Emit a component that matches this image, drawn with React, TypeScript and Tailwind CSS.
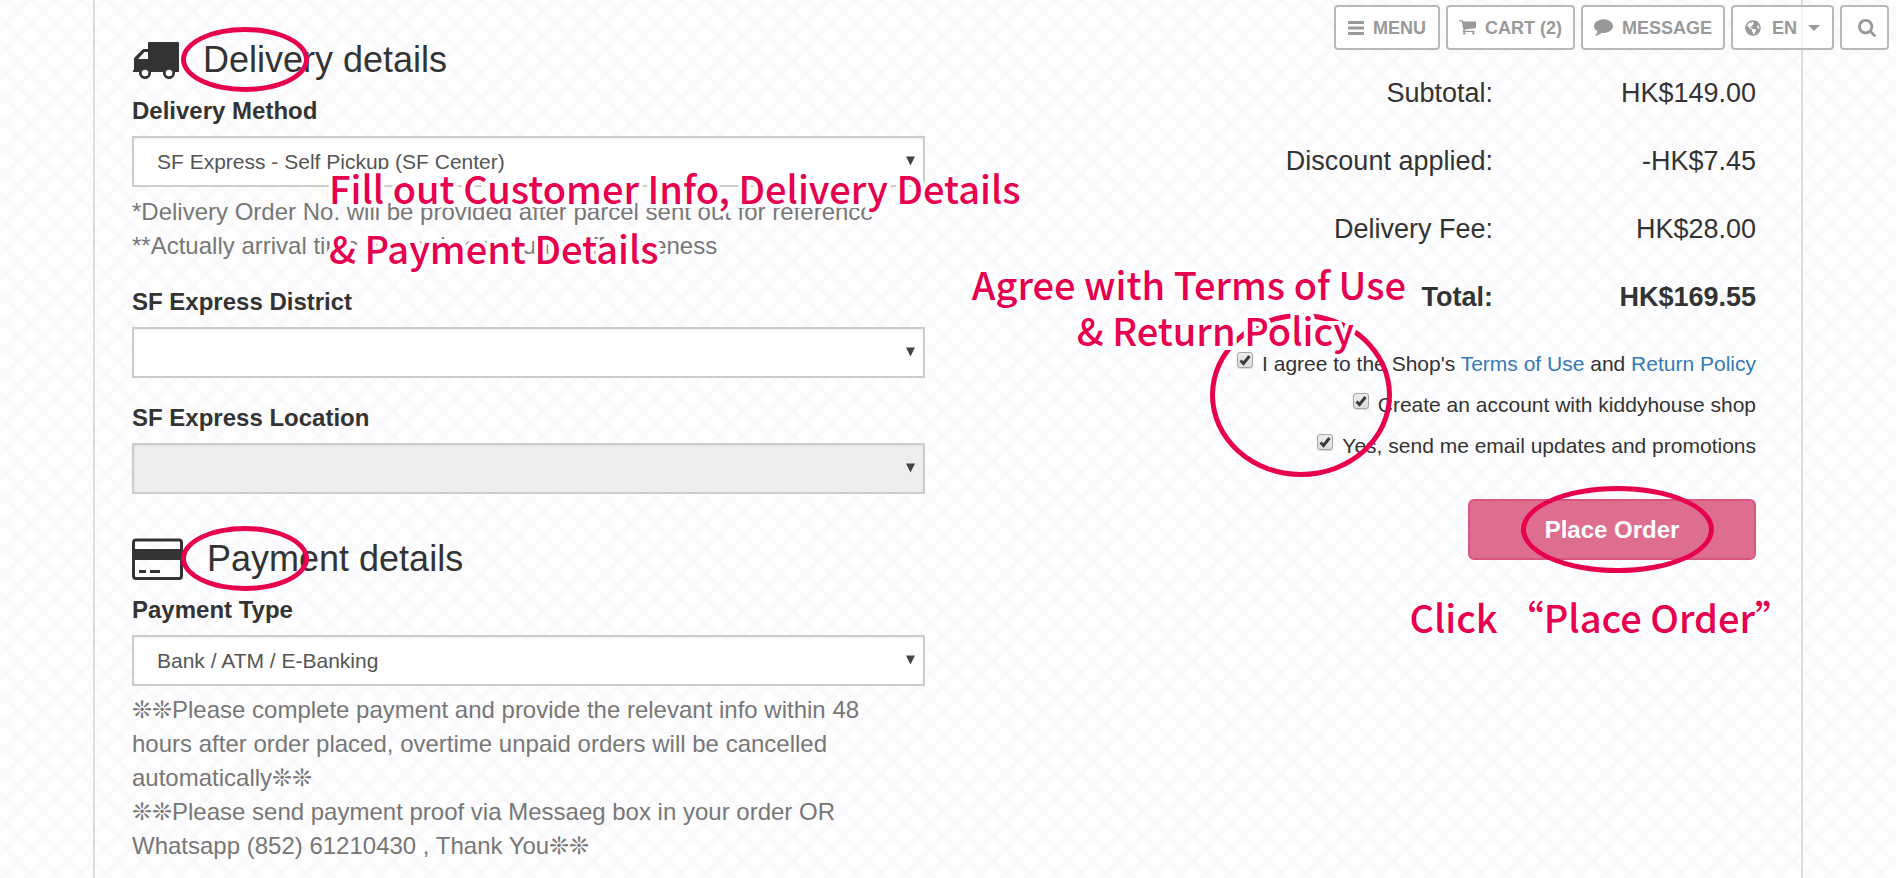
import React, { useState } from 'react';
import { FaGlobeAmericas } from 'react-icons/fa';

const navButton =
  'flex h-[45px] items-center rounded-[4px] border-2 border-[#b9b9b9] bg-white/70 text-lg font-bold text-[#999]';

const noteText =
  "pointer-events-none absolute z-10 whitespace-nowrap font-['Noto_Sans_CJK_TC',sans-serif] text-[38px] font-medium text-[#e6004f] [-webkit-text-stroke:8px_#fff] [paint-order:stroke_fill]";

const ring = 'pointer-events-none absolute rounded-[50%] border-[5px] border-[#e6004f]';

const Backdrop: React.FC = () => (
  <svg className="pointer-events-none absolute inset-0 -z-10 h-full w-full" aria-hidden="true">
    <defs>
      <pattern id="lattice" width="25" height="25" patternUnits="userSpaceOnUse" x="18" y="11">
        <path d="M-2 -2L27 27M27 -2L-2 27" stroke="#fbfbfd" strokeWidth="5" />
        <path d="M-2 -2L27 27M27 -2L-2 27" stroke="#fafafc" strokeWidth="3" />
        <circle cx="12.5" cy="12.5" r="3" fill="#f9f9fc" />
        <circle cx="0" cy="0" r="3" fill="#f9f9fc" />
        <circle cx="25" cy="0" r="3" fill="#f9f9fc" />
        <circle cx="0" cy="25" r="3" fill="#f9f9fc" />
        <circle cx="25" cy="25" r="3" fill="#f9f9fc" />
      </pattern>
    </defs>
    <rect width="100%" height="100%" fill="url(#lattice)" />
  </svg>
);

const BarsIcon: React.FC = () => (
  <svg width="16" height="14" viewBox="0 0 16 14" fill="currentColor" aria-hidden="true">
    <rect width="16" height="3" rx="0.600" />
    <rect y="5.500" width="16" height="3" rx="0.600" />
    <rect y="11" width="16" height="3" rx="0.600" />
  </svg>
);

const CartIcon: React.FC = () => (
  <svg width="17" height="15" viewBox="0 256 1664 1408" fill="currentColor" aria-hidden="true">
    <path d="M640 1536q0 52-38 90t-90 38-90-38-38-90 38-90 90-38 90 38 38 90zm896 0q0 52-38 90t-90 38-90-38-38-90 38-90 90-38 90 38 38 90zm128-1088v512q0 24-16.500 42.500t-40.500 21.500l-1044 122q13 60 13 70 0 16-24 64h920q26 0 45 19t19 45-19 45-45 19h-1024q-26 0-45-19t-19-45q0-11 8-31.500t16-36 21.500-40 15.500-29.500l-177-823h-204q-26 0-45-19t-19-45 19-45 45-19h256q16 0 28.500 6.500t19.500 15.500 13 24.500 8 26 5.500 29.500 4.500 26h1201q26 0 45 19t19 45z" />
  </svg>
);

const CommentIcon: React.FC = () => (
  <svg width="19" height="17" viewBox="0 256 1792 1536" fill="currentColor" aria-hidden="true">
    <path d="M1792 896q0 174-120 321.500t-326 233-450 85.500q-70 0-145-8-198 175-460 242-49 14-114 22-17 2-30.500-9t-17.500-29v-1q-3-4-.5-12t2-10 4.500-9.500l6-9 7-8.500 8-9q7-8 31-34.500t34.500-38 31-39.500 32.500-51 27-59 26-76q-157-89-247.500-220t-90.500-281q0-130 71-248.500t191-204.500 286-136.500 348-50.500q244 0 450 85.500t326 233 120 321.500z" />
  </svg>
);

const SearchIcon: React.FC = () => (
  <svg width="18" height="18" viewBox="64 128 1664 1664" fill="currentColor" aria-hidden="true">
    <path d="M1216 832q0-185-131.500-316.500t-316.500-131.500-316.500 131.500-131.500 316.500 131.500 316.500 316.500 131.500 316.500-131.500 131.500-316.500zm512 832q0 52-38 90t-90 38q-54 0-90-38l-343-342q-179 124-399 124-143 0-273.500-55.500t-225-150-150-225-55.500-273.500 55.500-273.500 150-225 225-150 273.500-55.500 273.500 55.500 225 150 150 225 55.500 273.500q0 220-124 399l343 343q37 37 37 90z" />
  </svg>
);

const Truck: React.FC = () => (
  <svg width="47" height="38" viewBox="0 0 47 38" aria-hidden="true">
    <path
      fill="#333"
      fillRule="evenodd"
      d="M17 1H46Q47 1 47 2V31H1V29H2V18Q2 17 3 16L10 9Q11 8 12 8H16V2Q16 1 17 1ZM6 18H16V11H12.500Z"
    />
    <circle cx="13" cy="32" r="4.700" fill="#fff" stroke="#333" strokeWidth="2.800" />
    <circle cx="37" cy="32" r="4.700" fill="#fff" stroke="#333" strokeWidth="2.800" />
  </svg>
);

const CreditCard: React.FC = () => (
  <svg width="51" height="42" viewBox="0 0 51 42" aria-hidden="true">
    <rect x="1.500" y="2" width="48" height="38.500" rx="2.500" fill="none" stroke="#333" strokeWidth="3" />
    <path fill="#333" d="M1 11H50V22H1ZM7 32H14V35H7ZM18 32H28V35H18Z" />
  </svg>
);

interface FieldProps {
  id: string;
  label: string;
  options: string[];
  disabled?: boolean;
}

const SelectField: React.FC<FieldProps> = ({ id, label, options, disabled }) => (
  <div>
    <label htmlFor={id} className="block text-2xl leading-[34px] font-bold text-[#333]">
      {label}
    </label>
    <div className="relative mt-2">
      <select
        id={id}
        disabled={disabled}
        className="block h-[51px] w-full appearance-none border-2 border-[#ccc] bg-white px-[23px] text-[21px] text-[#555] shadow-[inset_0_1px_2px_rgba(0,0,0,0.08)] disabled:bg-[#eee] disabled:opacity-100"
      >
        {options.map((o) => (
          <option key={o}>{o}</option>
        ))}
      </select>
      <svg className="pointer-events-none absolute top-5 right-[10px]" width="9" height="10" viewBox="0 0 9 10" aria-hidden="true">
        <path d="M0 0.500H9L4.500 9.500Z" fill="#444" />
      </svg>
    </div>
  </div>
);

const totals = [
  { label: 'Subtotal:', value: 'HK$149.00' },
  { label: 'Discount applied:', value: '-HK$7.45' },
  { label: 'Delivery Fee:', value: 'HK$28.00' },
  { label: 'Total:', value: 'HK$169.55', bold: true },
];

interface CheckProps {
  id: string;
  children: React.ReactNode;
}

const CheckRow: React.FC<CheckProps> = ({ id, children }) => {
  const [checked, setChecked] = useState(true);
  return (
    <div className="flex h-[41px] items-center justify-end gap-[9px] text-[21px] text-[#333]">
      <span className="relative mb-2 block h-4 w-4">
        <input
          id={id}
          type="checkbox"
          checked={checked}
          onChange={() => setChecked(!checked)}
          className="block h-4 w-4 appearance-none rounded-[3px] border border-[#a5a5a5] bg-linear-to-b from-[#eee] to-[#dcdcdc] shadow-[0_1px_1px_rgba(0,0,0,0.15)]"
        />
        {checked && (
          <svg className="pointer-events-none absolute inset-0" width="16" height="16" viewBox="0 0 16 16" aria-hidden="true">
            <path d="M3.500 8.500L6.500 11.500L12.500 4" fill="none" stroke="#3c3c3c" strokeWidth="3" />
          </svg>
        )}
      </span>
      <label htmlFor={id}>{children}</label>
    </div>
  );
};

const App: React.FC = () => {
  return (
    <div className="relative isolate min-h-screen overflow-hidden bg-[#fefefe] px-[93px] font-['Liberation_Sans',Arial,sans-serif]">
      <Backdrop />

      <nav className="absolute top-[5px] right-[7px] z-20 flex gap-[6px]">
        <button className={`${navButton} gap-[9px] px-3`}>
          <BarsIcon />
          MENU
        </button>
        <button className={`${navButton} gap-[9px] px-[11px]`}>
          <CartIcon />
          CART (2)
        </button>
        <button className={`${navButton} gap-[9px] px-[11px]`}>
          <CommentIcon />
          MESSAGE
        </button>
        <button className={`${navButton} gap-[11px] px-3`}>
          <FaGlobeAmericas size={16} />
          EN
          <svg width="12" height="6" viewBox="0 0 12 6" fill="currentColor" aria-hidden="true">
            <path d="M0 0H12L6 6Z" />
          </svg>
        </button>
        <button className={`${navButton} pr-[11px] pl-4`} aria-label="Search">
          <SearchIcon />
        </button>
      </nav>

      <main className="flex min-h-screen justify-between border-x-2 border-[#ddd] pr-[45px] pl-[37px]">
        <form className="w-1/2 max-w-[793px]">
          <section>
            <h2 className="relative mt-[38px] flex h-11 items-center gap-6 text-4xl text-[#333]">
              <Truck />
              Delivery details
              <span className={`${ring} top-[-11px] left-[49px] h-[65px] w-32`} />
            </h2>
            <div className="relative mt-3">
              <SelectField id="method" label="Delivery Method" options={['SF Express - Self Pickup (SF Center)']} />
              <p className="mt-2 text-2xl leading-[34px] text-[#777]">
                *Delivery Order No. will be provided after parcel sent out for reference
                <br />
                **Actually arrival time depends on courier effectiveness
              </p>
              <p className={`${noteText} top-[64px] left-[197px] leading-[60px]`}>
                Fill out Customer Info, Delivery Details
                <br />
                &amp; Payment Details
              </p>
            </div>
            <div className="mt-[22px] flex flex-col gap-[23px]">
              <SelectField id="district" label="SF Express District" options={['']} />
              <SelectField id="location" label="SF Express Location" options={['']} disabled />
            </div>
          </section>

          <section>
            <h2 className="relative mt-[43px] flex h-11 items-center gap-6 text-4xl text-[#333]">
              <CreditCard />
              Payment details
              <span className={`${ring} top-[-11px] left-[49px] h-[65px] w-32`} />
            </h2>
            <div className="mt-3">
              <SelectField id="payment" label="Payment Type" options={['Bank / ATM / E-Banking']} />
              <p className="mt-[7px] max-w-[740px] text-2xl leading-[34px] text-[#777]">
                ❊❊Please complete payment and provide the relevant info within 48 hours after order placed, overtime
                unpaid orders will be cancelled automatically❊❊
                <br />
                ❊❊Please send payment proof via Messaeg box in your order OR Whatsapp (852) 61210430 , Thank You❊❊
              </p>
            </div>
          </section>
        </form>

        <section className="relative mt-[59px] flex flex-col items-end">
          <table className="text-[27px] text-[#333]">
            <tbody>
              {totals.map((row) => (
                <tr key={row.label} className={row.bold ? 'h-[68px] font-bold' : 'h-[68px]'}>
                  <td className="text-right">{row.label}</td>
                  <td className="w-[263px] text-right">{row.value}</td>
                </tr>
              ))}
            </tbody>
          </table>

          <div className="relative mt-3">
            <CheckRow id="terms">
              I agree to the Shop's{' '}
              <a href="#terms" className="text-[#337ab7]">
                Terms of Use
              </a>{' '}
              and{' '}
              <a href="#returns" className="text-[#337ab7]">
                Return Policy
              </a>
            </CheckRow>
            <CheckRow id="account">Create an account with kiddyhouse shop</CheckRow>
            <CheckRow id="updates">Yes, send me email updates and promotions</CheckRow>
            <span className={`${ring} top-[-30px] right-[364px] h-[164px] w-[182px]`} />
            <p className={`${noteText} right-[350px] bottom-[113px] text-right leading-[46px]`}>
              Agree with Terms of Use
              <br />
              <span className="mr-[52px]">&amp; Return Policy</span>
            </p>
          </div>

          <div className="relative mt-[33px]">
            <button className="h-[61px] w-72 rounded-md border-2 border-[#d9567f] bg-[#de6e90] text-2xl font-bold text-white">
              Place Order
            </button>
            <span className={`${ring} top-[-13px] right-[42px] h-[87px] w-[193px]`} />
            <p className={`${noteText} top-[88px] right-[-37px] flex gap-2 leading-[60px]`}>
              <span>Click</span>
              <span>“Place Order”</span>
            </p>
          </div>
        </section>
      </main>
    </div>
  );
};

export default App;
